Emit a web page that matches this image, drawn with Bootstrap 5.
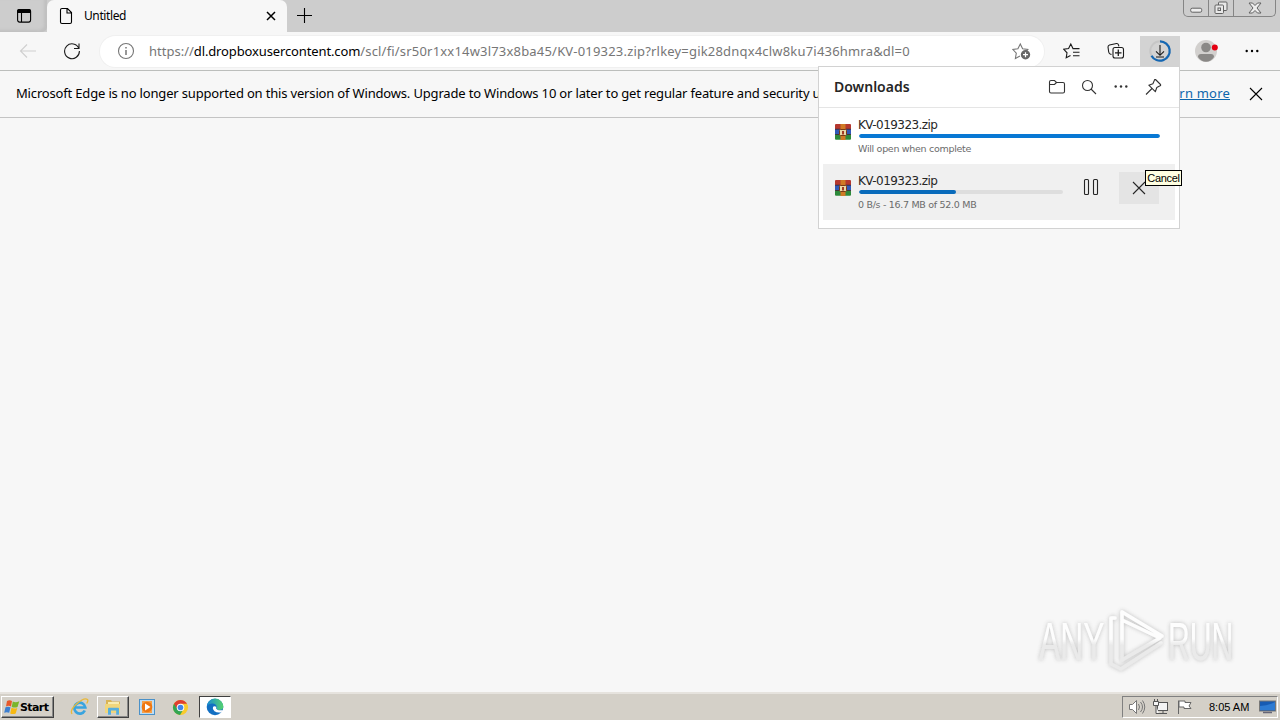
<!DOCTYPE html>
<html lang="en">
<head>
  <meta charset="UTF-8" />
  <meta name="viewport" content="width=device-width, initial-scale=1.0" />
  <title>Untitled</title>
  <link href="https://cdn.jsdelivr.net/npm/bootstrap@5.3.3/dist/css/bootstrap.min.css" rel="stylesheet">
  <style>
    body {
      width: 1280px;
      height: 720px;
      overflow: hidden;
      background: #f7f7f7;
      color: #000;
      font-family: "Noto Sans", "Open Sans", sans-serif;
      font-size: 12px;
      line-height: 1;
      white-space: nowrap;
    }
    svg { display: block; flex-shrink: 0; }
    .ln { fill: none; stroke: currentColor; stroke-width: 1.1; }

    /* tab strip */
    .tab-strip { height: 32px; background: #cdcdcd; }
    .strip-menu { width: 47px; border-bottom-right-radius: 5px; box-shadow: inset -3px -2px 3px #c0c0c0; }
    .page-tab { width: 240px; background: #f7f7f7; border-radius: 7px 7px 0 0; padding: 0 10px 0 12px; }
    .tab-title { margin-left: 11px; font-size: 12px; letter-spacing: -.4px; }
    .win-buttons { width: 93px; height: 17px; margin-right: 4px; border: 1px solid #858585; border-top: 0; border-radius: 0 0 5px 5px; color: #626262; }
    .win-buttons > div { border-right: 1px solid #858585; }
    .win-buttons > div:last-child { border-right: 0; }

    /* toolbar */
    .edge-toolbar { height: 39px; padding: 0 8px; border-bottom: 1px solid #bcbebc; }
    .tool-btn { width: 40px; height: 31px; color: #1b1b1b; }
    .address-bar { width: 944px; height: 31px; background: #fff; border-radius: 16px; padding: 0 13px 0 17px; margin: 0 8px 0 8px; color: #767676; font-size: 13px; box-shadow: 0 0 0 1px #f0f0f0; }
    .url-text { margin-left: 14px; letter-spacing: .19px; }
    .url-text .scheme { letter-spacing: 0; }
    .url-text .host { color: #000; letter-spacing: -.13px; }

    /* unsupported version bar */
    .info-bar { height: 47px; padding: 0 16px 2px; border-bottom: 1px solid #c4c4c4; font-size: 13px; }
    .info-bar a { color: #0c66ad; letter-spacing: .2px; }
    .info-text { letter-spacing: -.17px; }

    /* downloads */
    .dl-panel { left: 818px; top: 66px; width: 362px; height: 163px; background: #fff; border: 1px solid #d2d2d2; color: #262626; font-family: "DejaVu Sans", sans-serif; }
    .dl-head { height: 41px; padding: 0 17px 0 15px; border-bottom: 1px solid #e5e5e5; color: #333; }
    .dl-title { font-family: "Noto Sans", sans-serif; font-size: 14px; font-weight: 600; color: #262626; }
    .dl-item { height: 56px; margin: 0 4px; padding: 11px 15px 0 12px; }
    .dl-item.hovered { background: #f0f0f0; }
    .dl-info { margin-left: 8px; }
    .dl-name { font-size: 12px; height: 15px; margin-left: -1px; letter-spacing: -.55px; }
    .dl-note { font-size: 9.5px; color: #6b6b6b; margin: 6px 0 0 -1px; letter-spacing: -.3px; }
    .dl-item .progress { height: 4px; border-radius: 2px; background: #dedede; }
    .dl-item .progress-bar { background: #0878d4; border-radius: 2px; }
    .cancel-btn { width: 40px; height: 32px; background: #e4e4e4; }
    .hint { left: 1145px; top: 170px; width: 37px; height: 16px; border: 1px solid #000; background: #ffffe1; color: #000; font-family: "Liberation Sans", sans-serif; font-size: 11px; letter-spacing: -.3px; z-index: 5; }

    .watermark { left: 1030px; top: 600px; opacity: .85; }

    /* taskbar */
    .task-bar { height: 28px; background: #d4d0c8; border-top: 2px solid #e6e3de; padding: 2px 2px 2px 1px; font-family: "DejaVu Sans", sans-serif; }
    .raised { border: 1px solid; border-color: #fff #404040 #404040 #fff; box-shadow: inset -1px -1px #888; }
    .sunken { border: 1px solid; border-color: #404040 #fff #fff #404040; background: #fff; }
    .start-btn { width: 53px; height: 22px; padding-left: 2px; font-size: 11px; font-weight: 700; letter-spacing: -.6px; }
    .task-btn { width: 32px; height: 22px; }
    .tray { width: 156px; height: 22px; border: 1px solid; border-color: #808080 #fff #fff #808080; padding: 0 1px 0 5px; font-family: "Liberation Sans", sans-serif; font-size: 11px; }
  </style>
</head>
<body class="d-flex flex-column position-relative">

  <!-- Tabs -->
  <div class="tab-strip d-flex">
    <div class="strip-menu d-flex align-items-center justify-content-center">
      <svg width="16" height="16" viewBox="0 0 16 16"><rect x="1.6" y="1.6" width="13" height="12.5" rx="2" class="ln"/><path d="M1 5V3q0-2 2-2h10q2 0 2 2v2z"/><path d="M5.5 5v9" class="ln"/></svg>
    </div>
    <div class="page-tab d-flex align-items-center">
      <svg width="14" height="18" viewBox="0 0 14 18"><path d="M3 1.5h5.500l4 4V15q0 1.500-1.500 1.500H3Q1.500 16.500 1.500 15V3Q1.500 1.500 3 1.500zM8 2v4h4.500" class="ln"/></svg>
      <span class="tab-title">Untitled</span>
      <svg class="ms-auto" width="12" height="12" viewBox="0 0 12 12"><path d="M2 2l8 8M10 2l-8 8" class="ln" style="stroke-width:1.5"/></svg>
    </div>
    <div class="d-flex align-items-center ps-2">
      <svg width="18" height="16" viewBox="0 0 18 16"><path d="M2 7.500h15M9.500 0v15" class="ln"/></svg>
    </div>
    <div class="win-buttons d-flex ms-auto">
      <div class="d-flex align-items-center justify-content-center" style="width:25px"><svg width="13" height="6" viewBox="0 0 13 6" class="mt-1"><rect x=".7" y="1.200" width="11" height="4" rx="1.500" fill="#eee" stroke="currentColor"/></svg></div>
      <div class="d-flex align-items-center justify-content-center" style="width:25px"><svg width="14" height="14" viewBox="0 0 14 14" fill="#e8e8e8" stroke="currentColor"><rect x="4.500" y="1" width="8.500" height="8.500" rx="1"/><rect x="1" y="4" width="8.500" height="8.500" rx="1"/><rect x="4" y="7" width="2.500" height="2.500"/></svg></div>
      <div class="d-flex align-items-center justify-content-center flex-fill"><svg width="14" height="12" viewBox="0 0 14 12"><path d="M1 1h3.500L7 3.500 9.500 1H13L9 6l4 5H9.500L7 8.500 4.500 11H1l4-5z" fill="#eee" stroke="currentColor"/></svg></div>
    </div>
  </div>

  <!-- Toolbar -->
  <div class="edge-toolbar d-flex align-items-center">
    <div class="tool-btn d-flex align-items-center justify-content-center" style="color:#cfcfcf"><svg width="18" height="16" viewBox="0 0 18 16"><path d="M17 8H1.500M8 1.500L1.500 8 8 14.500" class="ln"/></svg></div>
    <div class="tool-btn d-flex align-items-center justify-content-center ms-1"><svg width="18" height="18" viewBox="0 0 18 18"><path d="M15.800 6.300A7.400 7.400 0 1 0 16.400 9M16 1.500v5h-5" class="ln"/></svg></div>
    <div class="address-bar d-flex align-items-center">
      <svg width="18" height="18" viewBox="0 0 18 18"><circle cx="9" cy="9" r="7.500" class="ln"/><path d="M9 8v5M9 5v1.500" class="ln" style="stroke-width:1.500"/></svg>
      <span class="url-text"><span class="scheme">https://</span><span class="host">dl.dropboxusercontent.com</span>/scl/fi/sr50r1xx14w3l73x8ba45/KV-019323.zip?rlkey=gik28dnqx4clw8ku7i436hmra&amp;dl=0</span>
      <svg class="ms-auto" width="19" height="18" viewBox="0 0 19 18"><path d="M8 14l-4.600 2.500.9-5.300L.9 7.500l5-.7L8.300 2l2.300 4.800 5.200.7-1.800 1.800" class="ln"/><circle cx="13.500" cy="12.700" r="4.700" fill="#666"/><path d="M11 12.700h5M13.500 10.200v5" stroke="#fff" stroke-width="1.200"/></svg>
    </div>
    <div class="tool-btn d-flex align-items-center justify-content-center"><svg width="18" height="18" viewBox="0 0 18 18"><path d="M7.500 13.500l-4.300 2.300.8-5L.8 7.300l4.800-.7L7.800 2l2.200 4.600h6.500M10 10.200h6.500M10 13.800h6.500" class="ln"/></svg></div>
    <div class="tool-btn d-flex align-items-center justify-content-center ms-1"><svg width="18" height="18" viewBox="0 0 18 18"><path d="M4.500 12.500l-1.300-.5Q2 11.500 1.700 10L1 5q0-1.500 1.500-2l7-1.500q1.500-.2 2 1.300l.4 1.500" class="ln"/><rect x="6" y="5.500" width="10.500" height="10.500" rx="2" class="ln"/><path d="M8 10.800h6.500M11.300 7.500V14" class="ln" style="stroke-width:1.300"/></svg></div>
    <div class="tool-btn d-flex align-items-center justify-content-center ms-1" style="background:#d3d3d3"><svg width="24" height="24" viewBox="0 0 24 24"><circle cx="12" cy="12" r="9.700" fill="none" stroke="#c6c6c6" stroke-width="2"/><path d="M12 2.300A9.700 9.700 0 1 1 3.500 16.700" fill="none" stroke="#1467b3" stroke-width="2.200"/><path d="M12 6v10M8 12.300l4 4 4-4M8 18h8" class="ln"/></svg></div>
    <div class="tool-btn d-flex align-items-center justify-content-center ms-1 ps-1"><svg width="24" height="24" viewBox="0 0 24 24"><circle cx="12" cy="12" r="11" fill="#d2d0ce"/><circle cx="12" cy="8.500" r="4.800" fill="#8a8886"/><path d="M4 18q0-3 3-3h10q3 0 3 3-3 4.800-8 4.800T4 18z" fill="#8a8886"/><circle cx="20.800" cy="8.500" r="3" fill="#e50012"/></svg></div>
    <div class="tool-btn d-flex align-items-center justify-content-center ms-auto"><svg width="14" height="4" viewBox="0 0 14 4"><circle cx="1.700" cy="2" r="1.200"/><circle cx="7" cy="2" r="1.200"/><circle cx="12.300" cy="2" r="1.200"/></svg></div>
  </div>

  <!-- Version notice -->
  <div class="info-bar d-flex align-items-center">
    <span class="info-text">Microsoft Edge is no longer supported on this version of Windows. Upgrade to Windows 10 or later to get regular feature and security u</span>
    <a href="#" class="ms-auto">Learn more</a>
    <svg style="margin:2px 0 0 18px" width="16" height="16" viewBox="0 0 16 16"><path d="M2 2l12 12M14 2L2 14" class="ln"/></svg>
  </div>

  <div class="flex-fill"></div>

  <!-- Downloads flyout -->
  <div class="dl-panel position-absolute">
    <div class="dl-head d-flex align-items-center">
      <span class="dl-title me-auto">Downloads</span>
      <svg width="18" height="16" viewBox="0 0 18 16"><path d="M1.500 3q0-1.500 1.500-1.500h3.500l2 2H15q1.500 0 1.500 1.500v7.500q0 1.500-1.500 1.500H3Q1.500 14 1.500 12.500zM1.500 5.500H6.500l2-2" class="ln"/></svg>
      <svg style="margin-left:15px" width="16" height="16" viewBox="0 0 16 16"><circle cx="6.500" cy="6.500" r="5" class="ln"/><path d="M10 10l5 5" class="ln"/></svg>
      <svg style="margin-left:17px" width="14" height="4" viewBox="0 0 14 4" fill="#333"><circle cx="1.700" cy="1.500" r="1.200"/><circle cx="7" cy="1.500" r="1.200"/><circle cx="12.300" cy="1.500" r="1.200"/></svg>
      <svg style="margin-left:17px" width="17" height="18" viewBox="0 0 17 18"><path d="M10.500 1.500l5 5q.5.800-.4 1.300l-3.300 1.700-1.500 4.200-6.500-6.500 4.100-1.500 1.500-3.500q.4-1 1.100-.7zM7 10.500l-6 6" class="ln" stroke-linejoin="round"/></svg>
    </div>

    <div class="dl-item d-flex">
      <svg style="margin-top:5px" width="16" height="16" viewBox="0 0 16 16"><use href="#rar"/></svg>
      <div class="dl-info flex-fill">
        <div class="dl-name">KV-019323.zip</div>
        <div class="progress"><div class="progress-bar" style="width:100%"></div></div>
        <div class="dl-note">Will open when complete</div>
      </div>
    </div>

    <div class="dl-item hovered d-flex">
      <svg style="margin-top:5px" width="16" height="16" viewBox="0 0 16 16"><use href="#rar"/></svg>
      <div class="dl-info" style="width:204px">
        <div class="dl-name">KV-019323.zip</div>
        <div class="progress"><div class="progress-bar" style="width:47.5%;background:#096bbb"></div></div>
        <div class="dl-note">0 B/s - 16.7 MB of 52.0 MB</div>
      </div>
      <svg style="margin:3px 0 0 20px" width="16" height="18" viewBox="0 0 16 18"><rect x="1.500" y="1.500" width="4" height="15" rx="1" class="ln"/><rect x="10.500" y="1.500" width="4" height="15" rx="1" class="ln"/></svg>
      <div class="cancel-btn d-flex align-items-center justify-content-center" style="margin:-3px 0 0 20px"><svg width="14" height="14" viewBox="0 0 14 14"><path d="M1 1l12 12M13 1L1 13" class="ln"/></svg></div>
    </div>
  </div>

  <div class="hint position-absolute d-flex align-items-center justify-content-center">Cancel</div>

  <svg class="watermark position-absolute" width="230" height="90" viewBox="0 0 230 90">
    <defs>
      <filter id="soft" x="-10%" y="-20%" width="120%" height="140%"><feDropShadow dx="0" dy="0" stdDeviation="2" flood-color="#777" flood-opacity=".55"/></filter>
      <linearGradient id="fade" x1="0" y1="20" x2="0" y2="62" gradientUnits="userSpaceOnUse"><stop offset=".45" stop-color="#fff"/><stop offset=".6" stop-color="#e8e8e8"/></linearGradient>
      <!-- same fade, measured from the letters' baseline -->
      <linearGradient id="fadeText" x1="0" y1="-38" x2="0" y2="0" gradientUnits="userSpaceOnUse"><stop offset=".45" stop-color="#fff"/><stop offset=".6" stop-color="#e8e8e8"/></linearGradient>
    </defs>
    <g filter="url(#soft)" fill="url(#fadeText)" font-family="Liberation Sans" font-size="53">
      <text transform="translate(9 60) scale(.6 1)">ANY</text>
      <text transform="translate(138 60) scale(.57 1)">RUN</text>
      <g fill="none" stroke="url(#fade)" stroke-width="3.500" stroke-linejoin="round" stroke-linecap="round">
        <path d="M92 12l40 24M92 12v48l38-22L92 20"/>
        <path d="M85 18h-4v46l10 5 40-26"/>
      </g>
    </g>
  </svg>

  <!-- Taskbar -->
  <div class="task-bar d-flex align-items-center">
    <div class="start-btn raised d-flex align-items-center">
      <svg width="16" height="16" viewBox="0 0 16 16"><path d="M3 2q2.500-1.500 5 0L7 7.500q-2.500-1.300-5 0z" fill="#e8592a"/><path d="M8.800 2.500q2.700 1.500 6.500-.2L13.500 8q-2.500 1.200-5.800 0z" fill="#7ab52c"/><path d="M1.500 8.300q2.500-1.300 5 0l-1.300 5.500q-2.500-1.300-5 0z" fill="#3d7fd0"/><path d="M7.500 8.800q2.900 1.400 5.800.1l-1.600 5.500q-2.700 1.300-5.500 0z" fill="#f7b912"/></svg>
      <span>Start</span>
    </div>
    <div style="margin-left:16px">
      <svg width="20" height="20" viewBox="0 0 20 20"><path d="M14.800 13.500A5.500 5.500 0 1 1 15.300 10.500H5.500" fill="none" stroke="#39a4df" stroke-width="2.700"/><path d="M2 17Q-.5 13 7 6.500T17.500 2.500q1 1-.8 4" fill="none" stroke="#e9b93a" stroke-width="1.300"/></svg>
    </div>
    <div class="task-btn raised d-flex align-items-center justify-content-center" style="margin-left:7px">
      <svg width="18" height="18" viewBox="0 0 18 18"><path d="M2 2h5l1 1.500h8V15H2z" fill="#d9b455"/><path d="M4 4h11v4H4z" fill="#f8ecb0"/><path d="M1 6h15v9H1z" fill="#f0d67c"/><path d="M4 16.800v-6q0-1 1-1h9q1 0 1 1v6h-2.800V12.500H7v4.300z" fill="#55aede"/></svg>
    </div>
    <div style="margin-left:10px">
      <svg width="16" height="16" viewBox="0 0 16 16"><rect x=".5" y=".5" width="15" height="15" fill="#bfddf3" stroke="#4b91c8"/><rect x="3" y="2" width="10" height="12" fill="#f5a04a"/><circle cx="8" cy="8" r="5.300" fill="#ef7711"/><path d="M6 4.500L11.500 8 6 11.500z" fill="#fff"/></svg>
    </div>
    <div style="margin-left:17px">
      <svg width="17" height="17" viewBox="0 0 18 18"><circle cx="9" cy="9" r="8" fill="#f9cb2c"/><path d="M2.100 5A8 8 0 0 0 8.500 17L12 11 9 9z" fill="#32a553"/><path d="M9 5h6.900a8 8 0 0 0-13.800 0L6 11z" fill="#df3e30"/><circle cx="9" cy="9" r="4" fill="#fff"/><circle cx="9" cy="9" r="3" fill="#4285e8"/></svg>
    </div>
    <div class="task-btn sunken d-flex align-items-center justify-content-center" style="margin-left:10px">
      <svg width="18" height="18" viewBox="0 0 18 18"><defs><linearGradient id="edgeTop"><stop stop-color="#178bd4"/><stop offset="1" stop-color="#56d36d"/></linearGradient></defs><circle cx="9" cy="9" r="8.300" fill="#126fc2"/><path d="M.8 8A8.300 8.300 0 0 1 17.300 8q.3 4-4 4-3 0-2.500-2Q11 6 7 5.500 3 5 .8 8z" fill="url(#edgeTop)"/><path d="M7 9Q8 7.500 10.300 8.800q-.8 2 1 2.900 2.500 1.200 5.500.2-.5 1.500-1.800 2.500-4 .7-6.500-1.200T7 9z" fill="#fff"/></svg>
    </div>

    <div class="tray d-flex align-items-center ms-auto">
      <svg width="18" height="16" viewBox="0 0 18 16" fill="#fff" stroke="#777"><path d="M1.500 5.500h3l4-4v13l-4-4h-3z"/><path d="M10.500 5q2 3 0 6M12.500 3q4 5 0 10M14.500 1.500q4.500 6.500 0 13" fill="none"/></svg>
      <svg style="margin-left:6px" width="18" height="16" viewBox="0 0 18 16" fill="#f4f4f4" stroke="#555"><rect x="5.500" y="3.500" width="10" height="8"/><path d="M7 14.500h8M11 12v2"/><path d="M1.500 2.500h5v4h-5zM2.500 0v2M5.500 0v2M4 6.500v8h3" /></svg>
      <svg style="margin-left:6px" width="17" height="16" viewBox="0 0 17 16" fill="#fff" stroke="#666"><path d="M2.500 15V1.500M3 2h6v1.500h6L13 7l2 2.500H8V8H3z"/></svg>
      <span style="margin-left:16px">8:05 AM</span>
      <svg class="ms-auto" width="17" height="16" viewBox="0 0 17 16"><rect x=".5" y="2" width="16" height="10" fill="#175bb3" stroke="#777"/><path d="M1 7q8 0 15-4v8H1z" fill="#2e7bd2"/><path d="M4 13.500h9" stroke="#667" stroke-width="1.500"/></svg>
    </div>
  </div>

  <svg width="0" height="0" class="position-absolute">
    <symbol id="rar" viewBox="0 0 16 16">
      <rect y="0" width="16" height="5.500" rx="1" fill="#b5382f"/><rect y="5" width="16" height="5.500" fill="#3159b8"/><rect y="10.300" width="16" height="5.500" rx="1" fill="#2d8a3a"/>
      <path d="M0 5.200h16M0 10.500h16" stroke="#3b2430" stroke-width=".8"/>
      <rect x="5.500" width="5" height="16" fill="#d07a25"/><rect x="4.500" y="5.500" width="7" height="6" rx="1" fill="#e8d9a8" stroke="#7b3b15"/><rect x="7" y="7" width="2" height="3.500" fill="#a33a25"/>
    </symbol>
  </svg>

  <script src="https://cdn.jsdelivr.net/npm/bootstrap@5.3.3/dist/js/bootstrap.bundle.min.js"></script>
</body>
</html>
